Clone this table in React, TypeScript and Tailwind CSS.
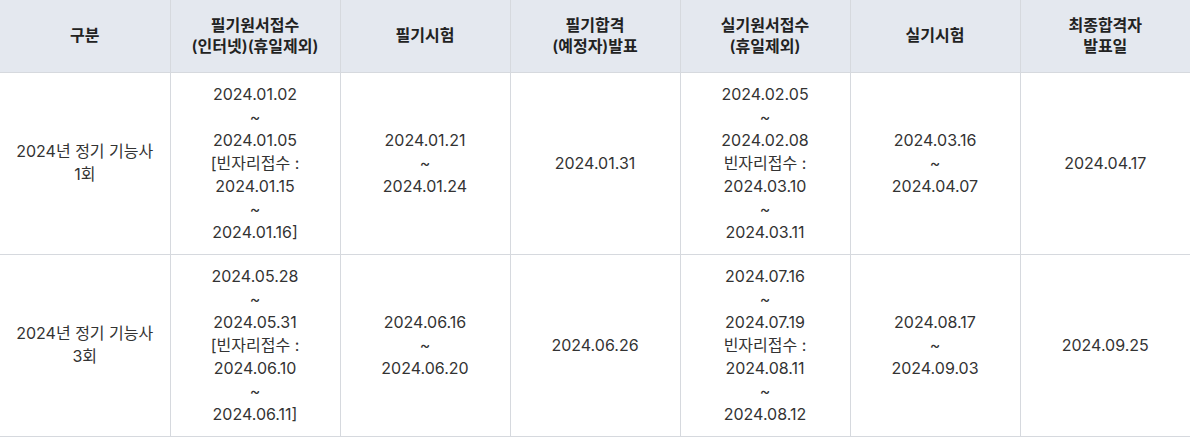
const headers = [
  ["구분"],
  ["필기원서접수", "(인터넷)(휴일제외)"],
  ["필기시험"],
  ["필기합격", "(예정자)발표"],
  ["실기원서접수", "(휴일제외)"],
  ["실기시험"],
  ["최종합격자", "발표일"],
];

const rows: string[][][] = [
  [
    ["2024년 정기 기능사", "1회"],
    ["2024.01.02", "~", "2024.01.05", "[빈자리접수 :", "2024.01.15", "~", "2024.01.16]"],
    ["2024.01.21", "~", "2024.01.24"],
    ["2024.01.31"],
    ["2024.02.05", "~", "2024.02.08", "빈자리접수 :", "2024.03.10", "~", "2024.03.11"],
    ["2024.03.16", "~", "2024.04.07"],
    ["2024.04.17"],
  ],
  [
    ["2024년 정기 기능사", "3회"],
    ["2024.05.28", "~", "2024.05.31", "[빈자리접수 :", "2024.06.10", "~", "2024.06.11]"],
    ["2024.06.16", "~", "2024.06.20"],
    ["2024.06.26"],
    ["2024.07.16", "~", "2024.07.19", "빈자리접수 :", "2024.08.11", "~", "2024.08.12"],
    ["2024.08.17", "~", "2024.09.03"],
    ["2024.09.25"],
  ],
];

export default function App() {
  return (
    <div className="w-[1190px] bg-white font-['Inter','Noto_Sans_CJK_KR',sans-serif]">
      <table className="w-full table-fixed border-collapse text-center">
        <thead>
          <tr className="h-[72px] bg-[#e4e8ef]">
            {headers.map((h, i) => (
              <th
                key={i}
                className="border-x border-b border-[#d6d9de] text-[16px] font-semibold leading-[21px] text-[#222] first:border-l-0 last:border-r-0"
              >
                {h.map((line, j) => (
                  <div key={j}>{line}</div>
                ))}
              </th>
            ))}
          </tr>
        </thead>
        <tbody>
          {rows.map((row, r) => (
            <tr key={r}>
              {row.map((cell, c) => (
                <td
                  key={c}
                  className="border border-[#d6d9de] py-[10px] text-[16px] leading-[23px] text-[#333] first:border-l-0 last:border-r-0"
                >
                  {cell.map((line, j) => (
                    <div key={j}>{line}</div>
                  ))}
                </td>
              ))}
            </tr>
          ))}
        </tbody>
      </table>
    </div>
  );
}
